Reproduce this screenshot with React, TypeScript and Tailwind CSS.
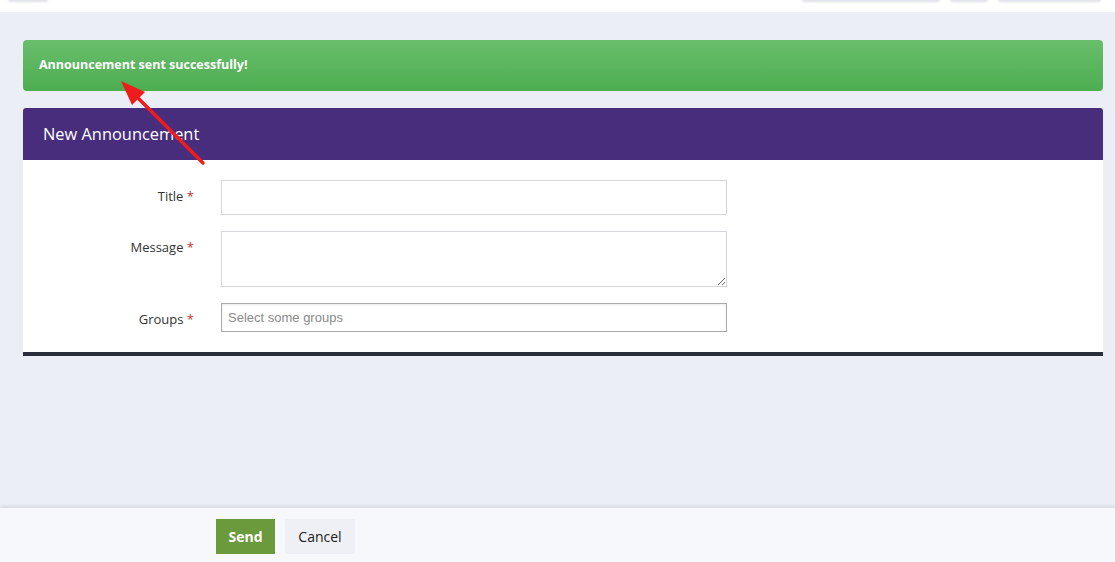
import React from "react";

function Field({ label, children, top = false, labelClass = "" }: { label: string; children: React.ReactNode; top?: boolean; labelClass?: string }) {
  return (
    <div className={`flex ${top ? "items-start" : "items-center"}`}>
      <label className={`w-[171px] text-right text-[13px] text-[#333] ${top ? "pt-[7px]" : ""} ${labelClass}`}>
        {label} <span className="text-[#c9302c]">*</span>
      </label>
      <div className="ml-[27px] w-[506px]">{children}</div>
    </div>
  );
}

export default function App() {
  return (
    <div
      className="relative flex h-[562px] w-[1115px] flex-col overflow-hidden bg-[#eceef6]"
      style={{ fontFamily: '"Open Sans", "Noto Sans", sans-serif' }}
    >
      {/* top bar, mostly scrolled off */}
      <div className="relative flex h-[12px] shrink-0 items-end bg-white">
        <div className="absolute left-[8px] top-[-20px] h-[21px] w-[40px] rounded-[3px] border border-[#e3e5ee] bg-white shadow-sm" />
        <div className="absolute left-[802px] top-[-20px] h-[21px] w-[138px] rounded-[3px] border border-[#e3e5ee] bg-white shadow-sm" />
        <div className="absolute left-[950px] top-[-20px] h-[21px] w-[38px] rounded-[3px] border border-[#e3e5ee] bg-white shadow-sm" />
        <div className="absolute left-[998px] top-[-20px] h-[21px] w-[103px] rounded-[3px] border border-[#e3e5ee] bg-white shadow-sm" />
      </div>

      <div className="flex-1 px-[23px] pr-[12px] pt-[28px]">
        <div className="flex h-[51px] items-center rounded-[4px] bg-gradient-to-b from-[#69be6c] to-[#4cad50] pl-[16px] text-[12.5px] font-bold text-white">
          Announcement sent successfully!
        </div>

        <div className="mt-[17px] overflow-hidden rounded-t-[3px] bg-white">
          <div className="flex h-[52px] items-center bg-[#482d7d] pl-[20px] text-[16.4px] text-white">
            New Announcement
          </div>
          <div className="flex flex-col gap-[16px] border-b-[4px] border-[#2b2f3b] pb-[20px] pt-[20px]">
            <Field label="Title" labelClass="-translate-y-[1px]">
              <input className="block h-[35px] w-full border border-[#d6d6de] bg-white outline-none" />
            </Field>
            <Field label="Message" top>
              <textarea className="block h-[56px] w-full resize-y border border-[#d6d6de] bg-white outline-none" />
            </Field>
            <Field label="Groups" labelClass="translate-y-[2px]">
              <div className="flex h-[29px] w-full items-center border border-[#aaaaaa] bg-white pl-[6px] shadow-[inset_0_1px_3px_rgba(0,0,0,0.08)]">
                <span className="text-[13px] text-[#8a8a8a]" style={{ fontFamily: '"Liberation Sans", Arial, sans-serif' }}>
                  Select some groups
                </span>
              </div>
            </Field>
          </div>
        </div>
      </div>

      <div className="flex h-[54px] shrink-0 items-center gap-[10px] bg-[#f7f8fc] pl-[216px] pt-[2px] shadow-[0_-2px_3px_rgba(0,0,0,0.08)]">
        <button className="h-[35px] w-[59px] bg-[#6b9a3c] text-[14px] font-bold text-white">Send</button>
        <button className="h-[35px] w-[70px] bg-[#eef0f5] text-[14px] text-[#222]">Cancel</button>
      </div>

      {/* annotation arrow */}
      <svg className="pointer-events-none absolute left-0 top-0" width="1115" height="562">
        <line x1="203" y1="163" x2="134" y2="94" stroke="#ee1c1c" strokeWidth="3.5" strokeLinecap="round" />
        <polygon points="121,81 145,92 132,105" fill="#ee1c1c" />
      </svg>
    </div>
  );
}
